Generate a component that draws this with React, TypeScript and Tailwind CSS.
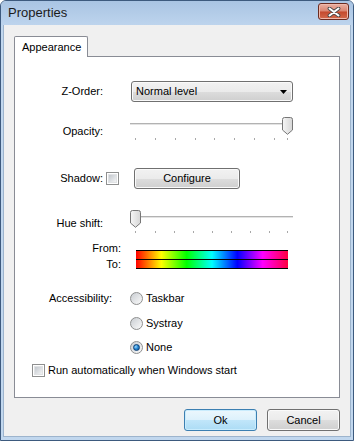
import React from 'react'

const btnGray =
  'rounded-[3px] border border-[#707070] bg-[linear-gradient(to_bottom,#f2f2f2_0%,#ebebeb_50%,#dddddd_50%,#cfcfcf_100%)] shadow-[inset_0_0_0_1px_#fafafa] flex items-center justify-center text-black'

const CheckBox: React.FC = () => (
  <div className="w-[13px] h-[13px] border border-[#8e8f8f] bg-white p-px shrink-0">
    <div className="w-full h-full bg-[linear-gradient(135deg,#c3c8ce,#f2f3f4)] border border-[#e0e2e4]" />
  </div>
)

const Radio: React.FC<{ checked?: boolean }> = ({ checked }) => (
  <div className="w-[13px] h-[13px] rounded-full border border-[#8e8f8f] bg-[linear-gradient(135deg,#c9cdd2,#fbfbfb)] flex items-center justify-center shrink-0">
    {checked && (
      <div className="w-[7px] h-[7px] rounded-full border border-[#0c3f75] bg-[radial-gradient(circle_at_35%_35%,#9ad8ff_0%,#2a8ad4_45%,#0d4f92_100%)]" />
    )}
  </div>
)

const Thumb: React.FC<{ id: string }> = ({ id }) => (
  <svg width="11" height="18" viewBox="0 0 11 18">
    <defs>
      <linearGradient id={id} x1="0" y1="0" x2="1" y2="0">
        <stop offset="0" stopColor="#f6f6f6" />
        <stop offset="1" stopColor="#d6d6d6" />
      </linearGradient>
    </defs>
    <path
      d="M0.5 2.5 Q0.5 0.5 2.5 0.5 H8.5 Q10.5 0.5 10.5 2.5 V13 L5.5 17.3 L0.5 13 Z"
      fill={`url(#${id})`}
      stroke="#767676"
    />
  </svg>
)

const Slider: React.FC<{ id: string; thumb: number; ticks: number[] }> = ({ id, thumb, ticks }) => (
  <div className="relative w-[163px] h-[26px]">
    <div className="absolute left-0 right-0 top-[7px] h-[3px] border-t border-[#b2b2b2] border-b border-b-white bg-[#e3e3e3]" />
    <div className="absolute top-px" style={{ left: thumb }}>
      <Thumb id={id} />
    </div>
    <svg className="absolute left-0 top-[22px]" width="163" height="3">
      {ticks.map((x) => (
        <rect key={x} x={x} y={0} width={1} height={2} fill="#a8a8a8" />
      ))}
    </svg>
  </div>
)

export default function App() {
  return (
    <div className="w-[354px] h-[441px] flex flex-col border border-[#3d5a7e] rounded-t-[6px] bg-[#c1d7ee] font-['Liberation_Sans',Arial,sans-serif] text-[11px] text-black overflow-hidden">
      {/* Title bar */}
      <div className="h-[24px] shrink-0 flex items-center pl-[7px] pr-[4px] bg-[linear-gradient(to_bottom,#a9c4e3,#bdd4ed)]">
        <span className="text-[13px] text-[#1b1b1b] flex-1">Properties</span>
        <button className="w-[31px] h-[17px] mt-[-3px] rounded-[3px] border border-[#6b2b20] bg-[linear-gradient(to_bottom,#eab0a2_0%,#d98470_48%,#c4492d_52%,#d36a4c_100%)] shadow-[inset_0_0_0_1px_#f0b9ab] flex items-center justify-center">
          <svg width="14" height="10" viewBox="0 0 14 10">
            <path d="M2.5 1.5 L11.5 8.5 M11.5 1.5 L2.5 8.5" stroke="#4a4a4a" strokeWidth="3.8" strokeLinecap="round" />
            <path d="M2.5 1.5 L11.5 8.5 M11.5 1.5 L2.5 8.5" stroke="#ffffff" strokeWidth="2" strokeLinecap="round" />
          </svg>
        </button>
      </div>

      {/* Client area */}
      <div className="flex-1 mx-[2px] mb-[3px] border border-t-0 border-[#9db4cd] bg-[#f0f0f0] pt-[11px] px-[10px] flex flex-col">
        {/* Tab strip */}
        <div className="flex h-[20px]">
          <div className="relative z-10 w-[74px] h-[21px] border border-b-0 border-[#898c95] rounded-t-[2px] bg-white flex items-center pl-[7px]">
            Appearance
          </div>
        </div>

        {/* Tab page */}
        <div className="h-[342px] border border-[#898c95] bg-white flex flex-col">
          {/* Z-Order */}
          <div className="flex items-center h-[21px] mt-[24px]">
            <div className="w-[88px] text-right">Z-Order:</div>
            <div className={`${btnGray} ml-[28px] w-[162px] h-[21px] !justify-between pl-[4px] pr-[5px]`}>
              <span>Normal level</span>
              <svg width="7" height="4" viewBox="0 0 7 4">
                <path d="M0 0 H7 L3.5 4 Z" fill="#000" />
              </svg>
            </div>
          </div>

          {/* Opacity */}
          <div className="flex mt-[14px]">
            <div className="w-[88px] text-right pt-[9px] leading-[13px]">Opacity:</div>
            <div className="ml-[27px]">
              <Slider id="op" thumb={152} ticks={[5, 25, 45, 65, 84, 104, 124, 144, 157]} />
            </div>
          </div>

          {/* Shadow */}
          <div className="flex items-center h-[21px] mt-[26px]">
            <div className="w-[88px] text-right">Shadow:</div>
            <div className="ml-[3px]">
              <CheckBox />
            </div>
            <div className={`${btnGray} ml-[15px] w-[106px] h-[21px]`}>Configure</div>
          </div>

          {/* Hue shift */}
          <div className="flex mt-[20px]">
            <div className="w-[88px] text-right pt-[8px] leading-[13px]">Hue shift:</div>
            <div className="ml-[27px]">
              <Slider id="hue" thumb={0} ticks={[5, 25, 44, 63, 82, 101, 120, 139, 157]} />
            </div>
          </div>

          {/* From / To */}
          <div className="flex">
            <div className="w-[106px] flex flex-col text-right pt-[5px]">
              <div className="h-[16px] leading-[16px]">From:</div>
              <div className="h-[16px] leading-[16px]">To:</div>
            </div>
            <div className="ml-[15px] mt-[15px] w-[152px] flex flex-col">
              <div className="h-[9px] border-t border-black bg-[linear-gradient(to_right,#ff0000,#ffff00,#00ff00,#00ffff,#0000ff,#ff00ff,#ff0040)]" />
              <div className="h-[10px] border-y border-black bg-[linear-gradient(to_right,#ff0000,#ffff00,#00ff00,#00ffff,#0000ff,#ff00ff,#ff0040)]" />
            </div>
          </div>

          {/* Accessibility */}
          <div className="flex mt-[19px]">
            <div className="w-[97px] text-right h-[14px] leading-[14px]">Accessibility:</div>
            <div className="ml-[18px] flex flex-col">
              <label className="flex items-center h-[14px] gap-[3px]">
                <Radio />
                <span>Taskbar</span>
              </label>
              <label className="flex items-center h-[14px] gap-[3px] mt-[11px]">
                <Radio />
                <span>Systray</span>
              </label>
              <label className="flex items-center h-[14px] gap-[3px] mt-[10px]">
                <Radio checked />
                <span>None</span>
              </label>
            </div>
          </div>

          {/* Autorun */}
          <label className="flex items-center h-[14px] gap-[3px] mt-[9px] pl-[17px]">
            <CheckBox />
            <span>Run automatically when Windows start</span>
          </label>
        </div>

        {/* Dialog buttons */}
        <div className="flex justify-end gap-[10px] mt-[11px]">
          <button className="w-[73px] h-[22px] rounded-[3px] border border-[#3c7fb1] bg-[linear-gradient(to_bottom,#ecf7fd_0%,#dcf1fc_50%,#c1e6fa_50%,#acdcf5_100%)] shadow-[inset_0_0_0_1px_#c9ecfd] flex items-center justify-center">
            Ok
          </button>
          <button className={`${btnGray} w-[73px] h-[22px]`}>Cancel</button>
        </div>
      </div>
    </div>
  )
}
